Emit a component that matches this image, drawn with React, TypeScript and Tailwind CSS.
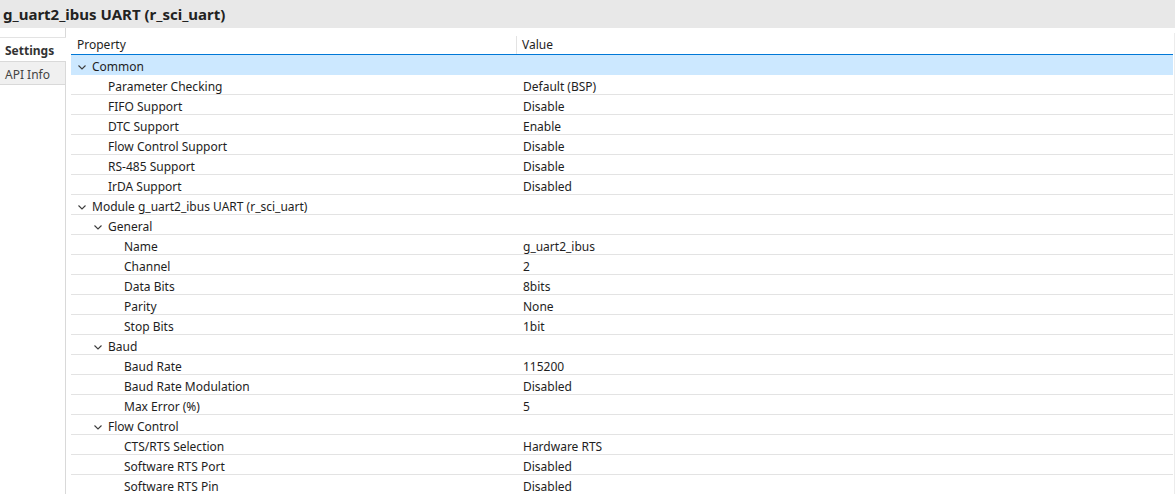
import React from "react";

type Row = {
  label: string;
  value?: string;
  level: number;
  group?: boolean;
  selected?: boolean;
};

const rows: Row[] = [
  { label: "Common", level: 0, group: true, selected: true },
  { label: "Parameter Checking", value: "Default (BSP)", level: 1 },
  { label: "FIFO Support", value: "Disable", level: 1 },
  { label: "DTC Support", value: "Enable", level: 1 },
  { label: "Flow Control Support", value: "Disable", level: 1 },
  { label: "RS-485 Support", value: "Disable", level: 1 },
  { label: "IrDA Support", value: "Disabled", level: 1 },
  { label: "Module g_uart2_ibus UART (r_sci_uart)", level: 0, group: true },
  { label: "General", level: 1, group: true },
  { label: "Name", value: "g_uart2_ibus", level: 2 },
  { label: "Channel", value: "2", level: 2 },
  { label: "Data Bits", value: "8bits", level: 2 },
  { label: "Parity", value: "None", level: 2 },
  { label: "Stop Bits", value: "1bit", level: 2 },
  { label: "Baud", level: 1, group: true },
  { label: "Baud Rate", value: "115200", level: 2 },
  { label: "Baud Rate Modulation", value: "Disabled", level: 2 },
  { label: "Max Error (%)", value: "5", level: 2 },
  { label: "Flow Control", level: 1, group: true },
  { label: "CTS/RTS Selection", value: "Hardware RTS", level: 2 },
  { label: "Software RTS Port", value: "Disabled", level: 2 },
  { label: "Software RTS Pin", value: "Disabled", level: 2 },
];

const Chevron = () => (
  <svg width="8" height="5" viewBox="0 0 8 5" className="ml-[1px]">
    <path d="M0.5 0.5 L4 4 L7.5 0.5" fill="none" stroke="#3c3c3c" strokeWidth="1.1" />
  </svg>
);

const PropertyRow: React.FC<{ row: Row }> = ({ row }) => {
  const indent = 6 + row.level * 16;
  return (
    <div
      className={`flex h-[20px] items-center border-b pt-[5px] ${
        row.selected ? "border-b-[#cce8ff] bg-[#cce8ff]" : "border-[#e3e3e3]"
      }`}
    >
      <div className="flex w-[446px] shrink-0 items-center" style={{ paddingLeft: indent }}>
        <span className="flex w-[15px] shrink-0 items-center">{row.group && <Chevron />}</span>
        <span className="whitespace-nowrap">{row.label}</span>
      </div>
      <div className="pl-[6px] whitespace-nowrap">{row.value}</div>
    </div>
  );
};

export default function App() {
  return (
    <div className="flex h-[494px] w-[1175px] flex-col overflow-hidden bg-white font-['Noto_Sans','Noto_Sans_CJK_SC',sans-serif] text-[12px] text-[#1e1e1e]">
      <div className="flex h-[28px] shrink-0 items-center bg-[#e8e8e8] px-[3px] pt-[1px] text-[15px] font-bold text-[#222]">
        g_uart2_ibus UART (r_sci_uart)
      </div>
      <div className="flex min-h-0 flex-1">
        <div className="flex w-[66px] shrink-0 flex-col">
          <div className="h-[9px] border-r border-[#d9d9d9]" />
          <div className="flex h-[24px] items-center border-t border-[#e3e3e3] pt-[3px] pl-[5px] font-bold text-[#333]">
            Settings
          </div>
          <div className="flex h-[24px] items-center border-y border-r border-[#d9d9d9] bg-[#f0f0f0] pt-[3px] pl-[5px] text-[#444]">
            API Info
          </div>
          <div className="flex-1 border-r border-[#d9d9d9]" />
        </div>
        <div className="ml-[5px] flex w-[1102px] shrink-0 flex-col pt-[5px]">
          <div className="flex h-[25px] items-center border-b border-[#0078d7] pt-[3px]">
            <div className="flex h-full w-[446px] shrink-0 items-center border-r border-[#e3e3e3] pl-[6px]">
              Property
            </div>
            <div className="pl-[5px]">Value</div>
          </div>
          {rows.map((r) => (
            <PropertyRow key={r.label} row={r} />
          ))}
        </div>
        <div className="mt-[5px] ml-[1px] w-[2px] bg-[#ececec]" />
      </div>
    </div>
  );
}
